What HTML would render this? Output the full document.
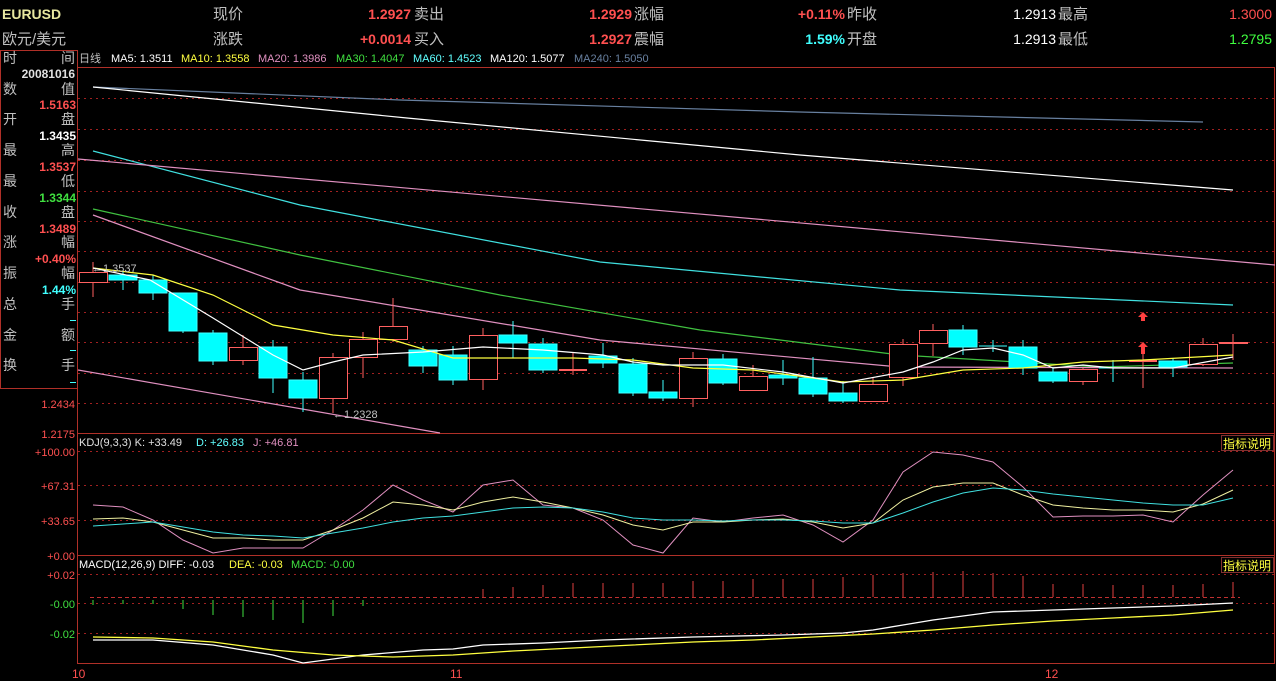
<!DOCTYPE html>
<html><head><meta charset="utf-8"><style>
html,body{margin:0;padding:0;background:#000;width:1276px;height:681px;overflow:hidden}
svg{display:block}
text{font-family:"Liberation Sans","Noto Sans CJK SC",sans-serif}
</style></head><body>
<svg width="1276" height="681" viewBox="0 0 1276 681" xmlns="http://www.w3.org/2000/svg">
<g font-size="15">
<text x="2" y="19" fill="#e8e8a0" font-weight="bold" font-size="14">EURUSD</text>
<text x="213" y="19" fill="#c0c0c0">现价</text>
<text x="411" y="19" fill="#ff5050" text-anchor="end" font-weight="bold" font-size="14">1.2927</text>
<text x="414" y="19" fill="#c0c0c0">卖出</text>
<text x="632" y="19" fill="#ff5050" text-anchor="end" font-weight="bold" font-size="14">1.2929</text>
<text x="634" y="19" fill="#c0c0c0">涨幅</text>
<text x="845" y="19" fill="#ff5050" text-anchor="end" font-weight="bold" font-size="14">+0.11%</text>
<text x="847" y="19" fill="#c0c0c0">昨收</text>
<text x="1056" y="19" fill="#ffffff" text-anchor="end" font-size="14">1.2913</text>
<text x="1058" y="19" fill="#c0c0c0">最高</text>
<text x="1272" y="19" fill="#ff5050" text-anchor="end" font-size="14">1.3000</text>
<text x="2" y="44" fill="#c0c0c0">欧元/美元</text>
<text x="213" y="44" fill="#c0c0c0">涨跌</text>
<text x="411" y="44" fill="#ff5050" text-anchor="end" font-weight="bold" font-size="14">+0.0014</text>
<text x="414" y="44" fill="#c0c0c0">买入</text>
<text x="632" y="44" fill="#ff5050" text-anchor="end" font-weight="bold" font-size="14">1.2927</text>
<text x="634" y="44" fill="#c0c0c0">震幅</text>
<text x="845" y="44" fill="#40ffff" text-anchor="end" font-weight="bold" font-size="14">1.59%</text>
<text x="847" y="44" fill="#c0c0c0">开盘</text>
<text x="1056" y="44" fill="#ffffff" text-anchor="end" font-size="14">1.2913</text>
<text x="1058" y="44" fill="#c0c0c0">最低</text>
<text x="1272" y="44" fill="#40ff40" text-anchor="end" font-size="14">1.2795</text>
</g>
<g font-size="11">
<text x="79" y="62" fill="#c0c0c0">日线</text>
<text x="111" y="62" fill="#ffffff">MA5: 1.3511</text>
<text x="181" y="62" fill="#ffff40">MA10: 1.3558</text>
<text x="258" y="62" fill="#e090c0">MA20: 1.3986</text>
<text x="336" y="62" fill="#40e040">MA30: 1.4047</text>
<text x="413" y="62" fill="#60ffff">MA60: 1.4523</text>
<text x="490" y="62" fill="#ffffff">MA120: 1.5077</text>
<text x="574" y="62" fill="#6880a0">MA240: 1.5050</text>
</g>
<!-- frames -->
<g stroke="#b03028" fill="none" stroke-width="1">
<rect x="0.5" y="50.5" width="77" height="338"/>
<line x1="77.5" y1="50" x2="77.5" y2="664"/>
<line x1="78" y1="67.5" x2="1275" y2="67.5"/>
<line x1="1274.5" y1="67" x2="1274.5" y2="664"/>
<line x1="78" y1="433.5" x2="1275" y2="433.5"/>
<line x1="78" y1="555.5" x2="1275" y2="555.5"/>
<line x1="78" y1="663.5" x2="1275" y2="663.5"/>
</g>
<g stroke="#a02020" stroke-dasharray="2,4" stroke-width="1">
<line x1="78" y1="98.5" x2="1274" y2="98.5"/><line x1="78" y1="129.5" x2="1274" y2="129.5"/>
<line x1="78" y1="160.5" x2="1274" y2="160.5"/><line x1="78" y1="191.5" x2="1274" y2="191.5"/>
<line x1="78" y1="221.5" x2="1274" y2="221.5"/><line x1="78" y1="251.5" x2="1274" y2="251.5"/>
<line x1="78" y1="282.5" x2="1274" y2="282.5"/><line x1="78" y1="312.5" x2="1274" y2="312.5"/>
<line x1="78" y1="342.5" x2="1274" y2="342.5"/><line x1="78" y1="373.5" x2="1274" y2="373.5"/>
<line x1="78" y1="403.5" x2="1274" y2="403.5"/>
<line x1="78" y1="451.5" x2="1274" y2="451.5"/><line x1="78" y1="485.5" x2="1274" y2="485.5"/>
<line x1="78" y1="520.5" x2="1274" y2="520.5"/>
<line x1="78" y1="574.5" x2="1274" y2="574.5"/><line x1="78" y1="603.5" x2="1274" y2="603.5"/>
<line x1="78" y1="633.5" x2="1274" y2="633.5"/>
</g>
<line x1="90" y1="597.5" x2="1240" y2="597.5" stroke="#c03030" stroke-dasharray="4,3"/>
<!-- left panel -->
<g font-size="14" fill="#c0c0c0">
<text x="3" y="63">时</text><text x="61" y="63">间</text>
<text x="75" y="78" fill="#e0e0e0" text-anchor="end" font-weight="bold" font-size="12">20081016</text>
<text x="3" y="94">数</text><text x="61" y="94">值</text>
<text x="76" y="109" fill="#ff5050" text-anchor="end" font-weight="bold" font-size="12">1.5163</text>
<text x="3" y="124">开</text><text x="61" y="124">盘</text>
<text x="76" y="140" fill="#ffffff" text-anchor="end" font-weight="bold" font-size="12">1.3435</text>
<text x="3" y="155">最</text><text x="61" y="155">高</text>
<text x="76" y="171" fill="#ff5050" text-anchor="end" font-weight="bold" font-size="12">1.3537</text>
<text x="3" y="186">最</text><text x="61" y="186">低</text>
<text x="76" y="202" fill="#40e040" text-anchor="end" font-weight="bold" font-size="12">1.3344</text>
<text x="3" y="217">收</text><text x="61" y="217">盘</text>
<text x="76" y="233" fill="#ff5050" text-anchor="end" font-weight="bold" font-size="12">1.3489</text>
<text x="3" y="247">涨</text><text x="61" y="247">幅</text>
<text x="76" y="263" fill="#ff5050" text-anchor="end" font-weight="bold" font-size="12">+0.40%</text>
<text x="3" y="278">振</text><text x="61" y="278">幅</text>
<text x="76" y="294" fill="#40ffff" text-anchor="end" font-weight="bold" font-size="12">1.44%</text>
<text x="3" y="309">总</text><text x="61" y="309">手</text>
<text x="3" y="340">金</text><text x="61" y="340">额</text>
<text x="3" y="370">换</text><text x="61" y="370">手</text>
</g>
<g stroke="#40ffff"><line x1="70" y1="320.5" x2="76" y2="320.5"/><line x1="70" y1="350.5" x2="76" y2="350.5"/><line x1="70" y1="382.5" x2="76" y2="382.5"/></g>
<g font-size="11" text-anchor="end">
<text x="75" y="408" fill="#ff5050">1.2434</text>
<text x="75" y="438" fill="#ff5050">1.2175</text>
<text x="75" y="456" fill="#ff5050">+100.00</text>
<text x="75" y="490" fill="#ff5050">+67.31</text>
<text x="75" y="525" fill="#ff5050">+33.65</text>
<text x="75" y="560" fill="#ff5050">+0.00</text>
<text x="75" y="579" fill="#ff5050">+0.02</text>
<text x="75" y="608" fill="#40e040">-0.00</text>
<text x="75" y="638" fill="#40e040">-0.02</text>
</g>
<g font-size="12" fill="#ff5050">
<text x="72" y="678">10</text><text x="450" y="678">11</text><text x="1045" y="678">12</text>
</g>
<!-- long lines -->
<g fill="none" stroke-width="1.2">
<polyline stroke="#6880a0" points="93,87 400,100 800,112 1203,122"/>
<polyline stroke="#ffffff" points="93,87 407,118 800,155 1233,190"/>
<polyline stroke="#40e0e0" points="93,151 300,205 600,262 900,290 1233,305"/>
<polyline stroke="#e090c0" points="78,159 1275,265"/>
<polyline stroke="#40c040" points="93,209 300,255 500,295 700,330 900,355 1100,367 1233,363"/>
<polyline stroke="#e090c0" points="93,215 300,290 600,340 900,367 1233,368"/>
<polyline stroke="#e090c0" points="78,370 440,433"/>
</g>
<!-- candles -->
<g stroke-width="1">
<g stroke="#ff6060" fill="none">
<line x1="93" y1="262" x2="93" y2="297"/><rect x="79.5" y="272.5" width="28" height="10" fill="#000"/>
<line x1="243" y1="335" x2="243" y2="365"/><rect x="229.5" y="347.5" width="28" height="13" fill="#000"/>
<line x1="333" y1="353" x2="333" y2="413"/><rect x="319.5" y="357.5" width="28" height="41" fill="#000"/>
<line x1="363" y1="332" x2="363" y2="378"/><rect x="349.5" y="339.5" width="28" height="18" fill="#000"/>
<line x1="393" y1="298" x2="393" y2="342"/><rect x="379.5" y="326.5" width="28" height="13" fill="#000"/>
<line x1="483" y1="328" x2="483" y2="390"/><rect x="469.5" y="335.5" width="28" height="44" fill="#000"/>
<line x1="573" y1="352" x2="573" y2="375"/><line x1="559" y1="370" x2="587" y2="370" stroke-width="2"/>
<line x1="693" y1="352" x2="693" y2="407"/><rect x="679.5" y="358.5" width="28" height="40" fill="#000"/>
<line x1="753" y1="365" x2="753" y2="391"/><rect x="739.5" y="376.5" width="28" height="14" fill="#000"/>
<line x1="873" y1="377" x2="873" y2="401"/><rect x="859.5" y="384.5" width="28" height="17" fill="#000"/>
<line x1="903" y1="339" x2="903" y2="386"/><rect x="889.5" y="344.5" width="28" height="33" fill="#000"/>
<line x1="933" y1="324" x2="933" y2="356"/><rect x="919.5" y="330.5" width="28" height="13" fill="#000"/>
<line x1="1083" y1="368" x2="1083" y2="385"/><rect x="1069.5" y="369.5" width="28" height="12" fill="#000"/>
<line x1="1143" y1="342" x2="1143" y2="388"/><line x1="1129" y1="361" x2="1157" y2="361" stroke-width="2"/>
<line x1="1203" y1="338" x2="1203" y2="366"/><rect x="1189.5" y="344.5" width="28" height="20" fill="#000"/>
<line x1="1233" y1="334" x2="1233" y2="360"/><line x1="1219" y1="343" x2="1248" y2="343" stroke-width="2"/>
</g>
<g stroke="#40ffff" fill="#00ffff">
<line x1="123" y1="270" x2="123" y2="290"/><rect x="109" y="275" width="28" height="5"/>
<line x1="153" y1="275" x2="153" y2="300"/><rect x="139" y="280" width="28" height="13"/>
<line x1="183" y1="293" x2="183" y2="333"/><rect x="169" y="293" width="28" height="38"/>
<line x1="213" y1="330" x2="213" y2="365"/><rect x="199" y="333" width="28" height="28"/>
<line x1="273" y1="340" x2="273" y2="393"/><rect x="259" y="347" width="28" height="31"/>
<line x1="303" y1="372" x2="303" y2="412"/><rect x="289" y="380" width="28" height="18"/>
<line x1="423" y1="346" x2="423" y2="373"/><rect x="409" y="350" width="28" height="16"/>
<line x1="453" y1="346" x2="453" y2="385"/><rect x="439" y="355" width="28" height="25"/>
<line x1="513" y1="321" x2="513" y2="358"/><rect x="499" y="335" width="28" height="8"/>
<line x1="543" y1="338" x2="543" y2="373"/><rect x="529" y="344" width="28" height="26"/>
<line x1="603" y1="343" x2="603" y2="368"/><rect x="589" y="356" width="28" height="7"/>
<line x1="633" y1="358" x2="633" y2="396"/><rect x="619" y="364" width="28" height="29"/>
<line x1="663" y1="380" x2="663" y2="401"/><rect x="649" y="392" width="28" height="6"/>
<line x1="723" y1="354" x2="723" y2="385"/><rect x="709" y="359" width="28" height="24"/>
<line x1="783" y1="360" x2="783" y2="385"/><rect x="769" y="375" width="28" height="3"/>
<line x1="813" y1="357" x2="813" y2="397"/><rect x="799" y="378" width="28" height="16"/>
<line x1="843" y1="381" x2="843" y2="403"/><rect x="829" y="393" width="28" height="8"/>
<line x1="963" y1="325" x2="963" y2="355"/><rect x="949" y="330" width="28" height="17"/>
<line x1="993" y1="340" x2="993" y2="352"/><line x1="979" y1="346" x2="1007" y2="346"/>
<line x1="1023" y1="340" x2="1023" y2="375"/><rect x="1009" y="347" width="28" height="21"/>
<line x1="1053" y1="367" x2="1053" y2="383"/><rect x="1039" y="372" width="28" height="9"/>
<line x1="1113" y1="360" x2="1113" y2="382"/><line x1="1099" y1="368" x2="1127" y2="368"/>
<line x1="1173" y1="358" x2="1173" y2="377"/><rect x="1159" y="361" width="28" height="6"/>
</g>
</g>
<!-- MA5/MA10 -->
<g fill="none" stroke-width="1.2">
<polyline stroke="#ffff40" points="93,268 153,275 213,295 273,325 333,335 393,340 453,358 513,358 573,358 633,360 693,368 753,370 813,378 843,382 903,380 963,370 1023,368 1083,362 1143,360 1233,355"/>
<polyline stroke="#ffffff" points="93,268 150,280 213,318 273,355 303,370 333,362 363,355 423,352 483,347 543,350 603,355 633,362 663,365 723,365 783,372 843,383 903,372 933,362 963,350 993,348 1023,355 1053,368 1083,365 1113,368 1173,368 1233,357"/>
</g>
<g fill="#ff4040"><path d="M1143,312 l5,5 h-3 v4 h-4 v-4 h-3z"/><path d="M1143,342 l5,5 h-3 v7 h-4 v-7 h-3z"/></g>
<g font-size="11" fill="#c0c0c0"><text x="92" y="272">←1.3537</text><text x="333" y="418">←1.2328</text></g>
<!-- KDJ -->
<g font-size="11"><text x="79" y="446" fill="#e0e0e0">KDJ(9,3,3) K: +33.49</text><text x="196" y="446" fill="#60ffff">D: +26.83</text><text x="253" y="446" fill="#e090c0">J: +46.81</text></g>
<g fill="none" stroke-width="1">
<polyline stroke="#e090c0" points="93,505 123,507 153,520 183,540 213,553 243,548 273,548 303,548 333,530 363,510 393,485 423,500 453,512 483,485 513,480 543,505 573,508 603,520 633,545 663,553 693,518 723,522 753,518 783,515 813,525 843,542 873,520 903,472 933,452 963,455 993,462 1023,487 1053,517 1083,516 1113,516 1143,515 1173,522 1203,495 1233,470"/>
<polyline stroke="#f0f0a0" points="93,519 123,518 153,522 183,530 213,538 243,538 273,540 303,540 333,530 363,518 393,502 423,505 453,510 483,502 513,497 543,502 573,508 603,515 633,525 663,530 693,522 723,522 753,520 783,519 813,522 843,528 873,523 903,500 933,487 963,483 993,483 1023,495 1053,505 1083,508 1113,510 1143,510 1173,512 1203,504 1233,490"/>
<polyline stroke="#40e0e0" points="93,526 123,524 153,522 183,527 213,532 243,535 273,536 303,538 333,533 363,528 393,522 423,518 453,516 483,512 513,508 543,507 573,508 603,512 633,518 663,520 693,520 723,521 753,520 783,520 813,521 843,523 873,523 903,513 933,502 963,493 993,488 1023,490 1053,494 1083,497 1113,500 1143,503 1173,505 1203,505 1233,498"/>
</g>
<g font-size="12"><rect x="1221.5" y="435.5" width="52" height="15" fill="#000" stroke="#803030"/><text x="1223" y="448" fill="#ffff40">指标说明</text>
<rect x="1221.5" y="557.5" width="52" height="15" fill="#000" stroke="#803030"/><text x="1223" y="570" fill="#ffff40">指标说明</text></g>
<!-- MACD -->
<g font-size="11"><text x="79" y="568" fill="#ffffff">MACD(12,26,9) DIFF: -0.03</text><text x="229" y="568" fill="#ffff40">DEA: -0.03</text><text x="291" y="568" fill="#40e040">MACD: -0.00</text></g>
<g stroke="#40e040"><line x1="93" y1="600" x2="93" y2="605"/><line x1="123" y1="600" x2="123" y2="604"/><line x1="153" y1="600" x2="153" y2="604"/><line x1="183" y1="600" x2="183" y2="609"/><line x1="213" y1="600" x2="213" y2="615"/><line x1="243" y1="600" x2="243" y2="617"/><line x1="273" y1="600" x2="273" y2="620"/><line x1="303" y1="600" x2="303" y2="623"/><line x1="333" y1="600" x2="333" y2="616"/><line x1="363" y1="600" x2="363" y2="606"/></g>
<g stroke="#e04040">
<line x1="483" y1="597" x2="483" y2="589"/><line x1="513" y1="597" x2="513" y2="587"/><line x1="543" y1="597" x2="543" y2="585"/><line x1="573" y1="597" x2="573" y2="583"/><line x1="603" y1="597" x2="603" y2="583"/><line x1="633" y1="597" x2="633" y2="583"/><line x1="663" y1="597" x2="663" y2="583"/><line x1="693" y1="597" x2="693" y2="581"/><line x1="723" y1="597" x2="723" y2="581"/><line x1="753" y1="597" x2="753" y2="579"/><line x1="783" y1="597" x2="783" y2="579"/><line x1="813" y1="597" x2="813" y2="579"/><line x1="843" y1="597" x2="843" y2="577"/><line x1="873" y1="597" x2="873" y2="575"/><line x1="903" y1="597" x2="903" y2="573"/><line x1="933" y1="597" x2="933" y2="572"/><line x1="963" y1="597" x2="963" y2="571"/><line x1="993" y1="597" x2="993" y2="573"/><line x1="1023" y1="597" x2="1023" y2="576"/><line x1="1053" y1="597" x2="1053" y2="584"/><line x1="1083" y1="597" x2="1083" y2="584"/><line x1="1113" y1="597" x2="1113" y2="585"/><line x1="1143" y1="597" x2="1143" y2="585"/><line x1="1173" y1="597" x2="1173" y2="585"/><line x1="1203" y1="597" x2="1203" y2="584"/><line x1="1233" y1="597" x2="1233" y2="582"/>
</g>
<g fill="none" stroke-width="1.3">
<polyline stroke="#ffffff" points="93,640 153,640 213,645 273,655 303,663 363,655 423,650 453,649 483,645 543,643 603,640 693,637 783,635 843,633 873,630 903,625 933,620 963,616 993,612 1053,610 1113,608 1173,606 1233,603"/>
<polyline stroke="#ffff40" points="93,637 153,638 213,642 273,650 333,655 393,657 453,655 513,651 573,648 633,645 693,642 753,640 813,637 873,634 933,630 993,625 1053,621 1113,618 1173,615 1233,610"/>
</g>
</svg>
</body></html>
